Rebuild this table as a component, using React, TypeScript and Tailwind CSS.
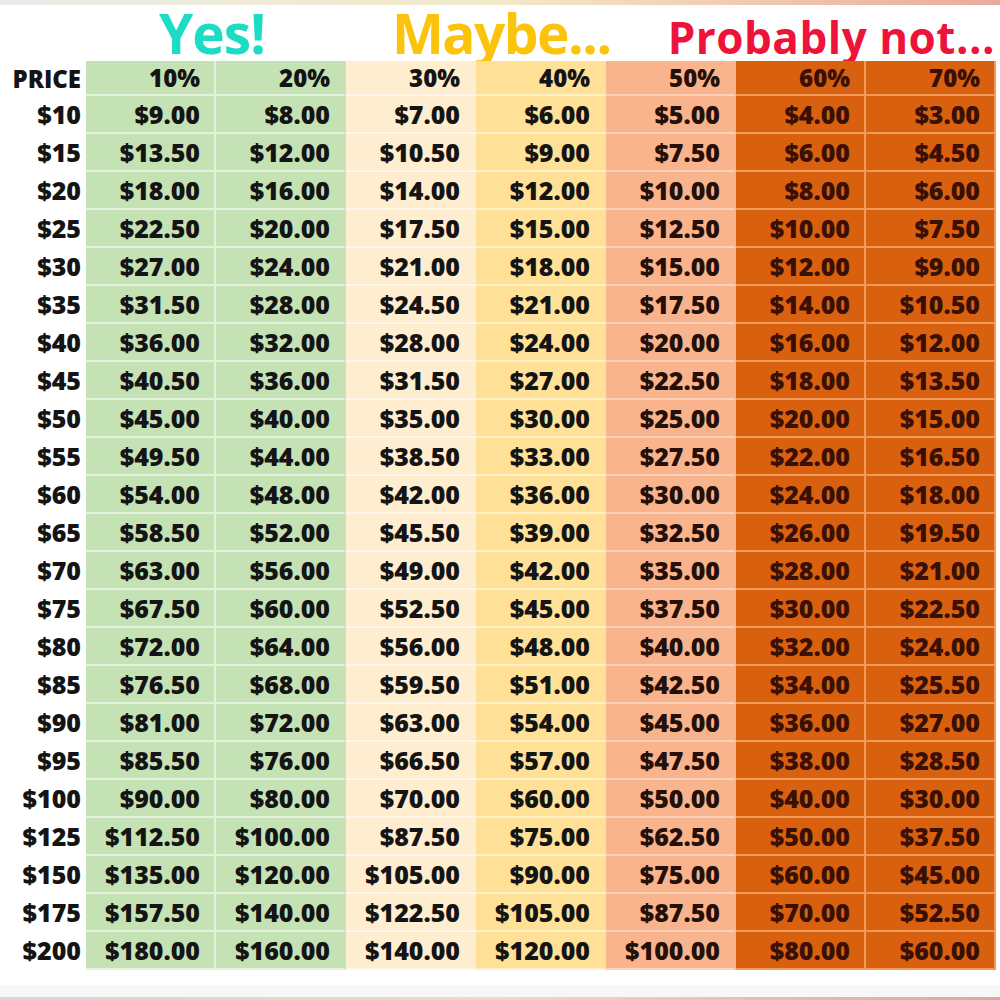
import React from 'react';

type Col = {
  label: string;
  rate: number;
  cell: string; // bg + border colours + text colour
};

const COLS: Col[] = [
  { label: '10%', rate: 0.9, cell: 'bg-[#c5e2b4] border-b-[#e4f1dc] border-r-[#e4f1dc] text-[#141414]' },
  { label: '20%', rate: 0.8, cell: 'bg-[#c5e2b4] border-b-[#e4f1dc] border-r-[#c5e2b4] text-[#141414]' },
  { label: '30%', rate: 0.7, cell: 'bg-[#feedcf] border-b-[#fff6e8] border-r-[#feedcf] text-[#141414]' },
  { label: '40%', rate: 0.6, cell: 'bg-[#fee196] border-b-[#fff0c6] border-r-[#fee196] text-[#141414]' },
  { label: '50%', rate: 0.5, cell: 'bg-[#f9b48e] border-b-[#fcd2b8] border-r-[#f9b48e] text-[#241008]' },
  { label: '60%', rate: 0.4, cell: 'bg-[#d9600f] border-b-[#f29c5c] border-r-[#f29c5c] text-[#3a1004]' },
  { label: '70%', rate: 0.3, cell: 'bg-[#d9600f] border-b-[#f29c5c] border-r-[#f29c5c] text-[#3a1004]' },
];

const PRICES = [10, 15, 20, 25, 30, 35, 40, 45, 50, 55, 60, 65, 70, 75, 80, 85, 90, 95, 100, 125, 150, 175, 200];

const money = (n: number) => '$' + n.toFixed(2);

const Cell = ({ col, head, children }: { col: Col; head?: boolean; children: React.ReactNode }) => (
  <div
    className={`${head ? 'h-[35px]' : 'h-[38px]'} w-[130px] border-b-2 border-r-2 flex items-center justify-end pr-[14px] ${col.cell}`}
  >
    {children}
  </div>
);

export default function App() {
  return (
    <div
      className="w-[1000px] h-[1000px] bg-white flex flex-col overflow-hidden"
      style={{ fontFamily: '"Open Sans", "Liberation Sans", sans-serif' }}
    >
      {/* blurred strip at the top edge */}
      <div className="h-[5px] bg-gradient-to-r from-[#e8ece9] via-[#f3e9c8] to-[#e9aa9c]" />

      {/* headings */}
      <div className="h-[56px] flex items-end font-bold leading-none whitespace-nowrap">
        <span className="ml-[159px] text-[55px] text-[#1ddcc5] tracking-[-1px] pb-[1px]">Yes!</span>
        <span className="ml-[127px] text-[55px] text-[#fcc30c] tracking-[-1.5px] pb-[1px]">Maybe...</span>
        <span className="ml-[57px] text-[44px] text-[#ee1439] tracking-[0.5px] pb-[2px]">Probably not...</span>
      </div>

      {/* table */}
      <div className="flex flex-col text-[25px] font-extrabold leading-none">
        <div className="flex">
          <div className="h-[35px] w-[86px] flex items-center justify-end pr-[5px] text-[24px] text-[#141414]">PRICE</div>
          {COLS.map((c) => (
            <Cell key={c.label} col={c} head>
              <span className="text-[24px]">{c.label}</span>
            </Cell>
          ))}
        </div>
        {PRICES.map((p) => (
          <div key={p} className="flex">
            <div className="h-[38px] w-[86px] flex items-center justify-end pr-[5px] pb-[2px] text-[#141414]">${p}</div>
            {COLS.map((c) => (
              <Cell key={c.label} col={c}>
                {money(p * c.rate)}
              </Cell>
            ))}
          </div>
        ))}
      </div>

      <div className="flex-1" />
      <div className="h-[12px] bg-[#f7f7f7]" />
      <div className="h-[3px] bg-gradient-to-r from-[#cfd8d2] via-[#ecdcc4] to-[#d9a89c]" />
    </div>
  );
}
